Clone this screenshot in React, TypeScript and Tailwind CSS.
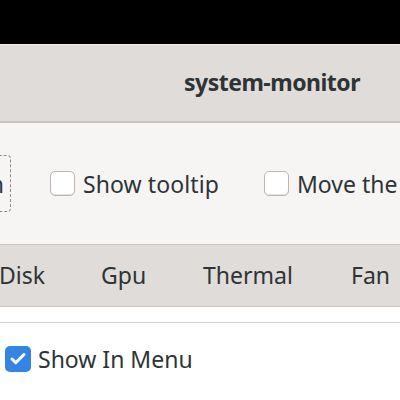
import { Check } from "lucide-react";

function Checkbox({ checked }: { checked?: boolean }) {
  if (checked) {
    return (
      <span className="flex h-[26px] w-[26px] shrink-0 items-center justify-center rounded-[5px] bg-[#3584e4] text-white">
        <Check size={18} strokeWidth={4} />
      </span>
    );
  }
  return (
    <span className="h-[25px] w-[25px] shrink-0 rounded-[5px] border border-[#bdb6b0] bg-white shadow-[inset_0_-1px_0_#e4e1de]" />
  );
}

export default function App() {
  return (
    <div className="h-[400px] w-[400px] overflow-hidden bg-white font-['Noto_Sans',sans-serif] text-[23px] leading-[28px] text-[#2e3436]">
      {/* desktop strip */}
      <div className="h-[44px] bg-black" />

      {/* header bar */}
      <div className="flex h-[79px] items-center border-t border-[#f1efed] border-b-2 border-b-[#c9c4bf] bg-[#dfdcd9] pb-[2px] pl-[184px]">
        <span className="whitespace-nowrap font-bold tracking-[-0.5px]">system-monitor</span>
      </div>

      {/* toolbar */}
      <div className="flex h-[121px] items-center bg-[#f6f5f4]">
        <div className="ml-[-40px] flex h-[57px] w-[51px] shrink-0 items-center justify-end rounded-[4px] border border-dashed border-[#8f8a86] pr-[6px]">
          n
        </div>
        <label className="ml-[39px] flex w-[214px] shrink-0 items-center gap-[8px] whitespace-nowrap">
          <Checkbox />
          <span className="tracking-[0.1px]">Show tooltip</span>
        </label>
        <label className="flex shrink-0 items-center gap-[8px] whitespace-nowrap">
          <Checkbox />
          <span>Move the</span>
        </label>
      </div>

      {/* tabs */}
      <div className="flex h-[63px] items-center border-y border-[#cdc7c2] bg-[#dfdcd9] pb-[2px]">
        <div className="flex w-[101px] shrink-0 justify-end pr-[56px]">Disk</div>
        <div className="w-[102px] shrink-0">Gpu</div>
        <div className="w-[148px] shrink-0">Thermal</div>
        <div className="shrink-0">Fan</div>
      </div>

      {/* page */}
      <div className="h-[16px] border-b border-[#d6d1cd] bg-white" />
      <div className="flex items-center gap-[7px] pl-[5px] pt-[22px]">
        <Checkbox checked />
        <span>Show In Menu</span>
      </div>
    </div>
  );
}
